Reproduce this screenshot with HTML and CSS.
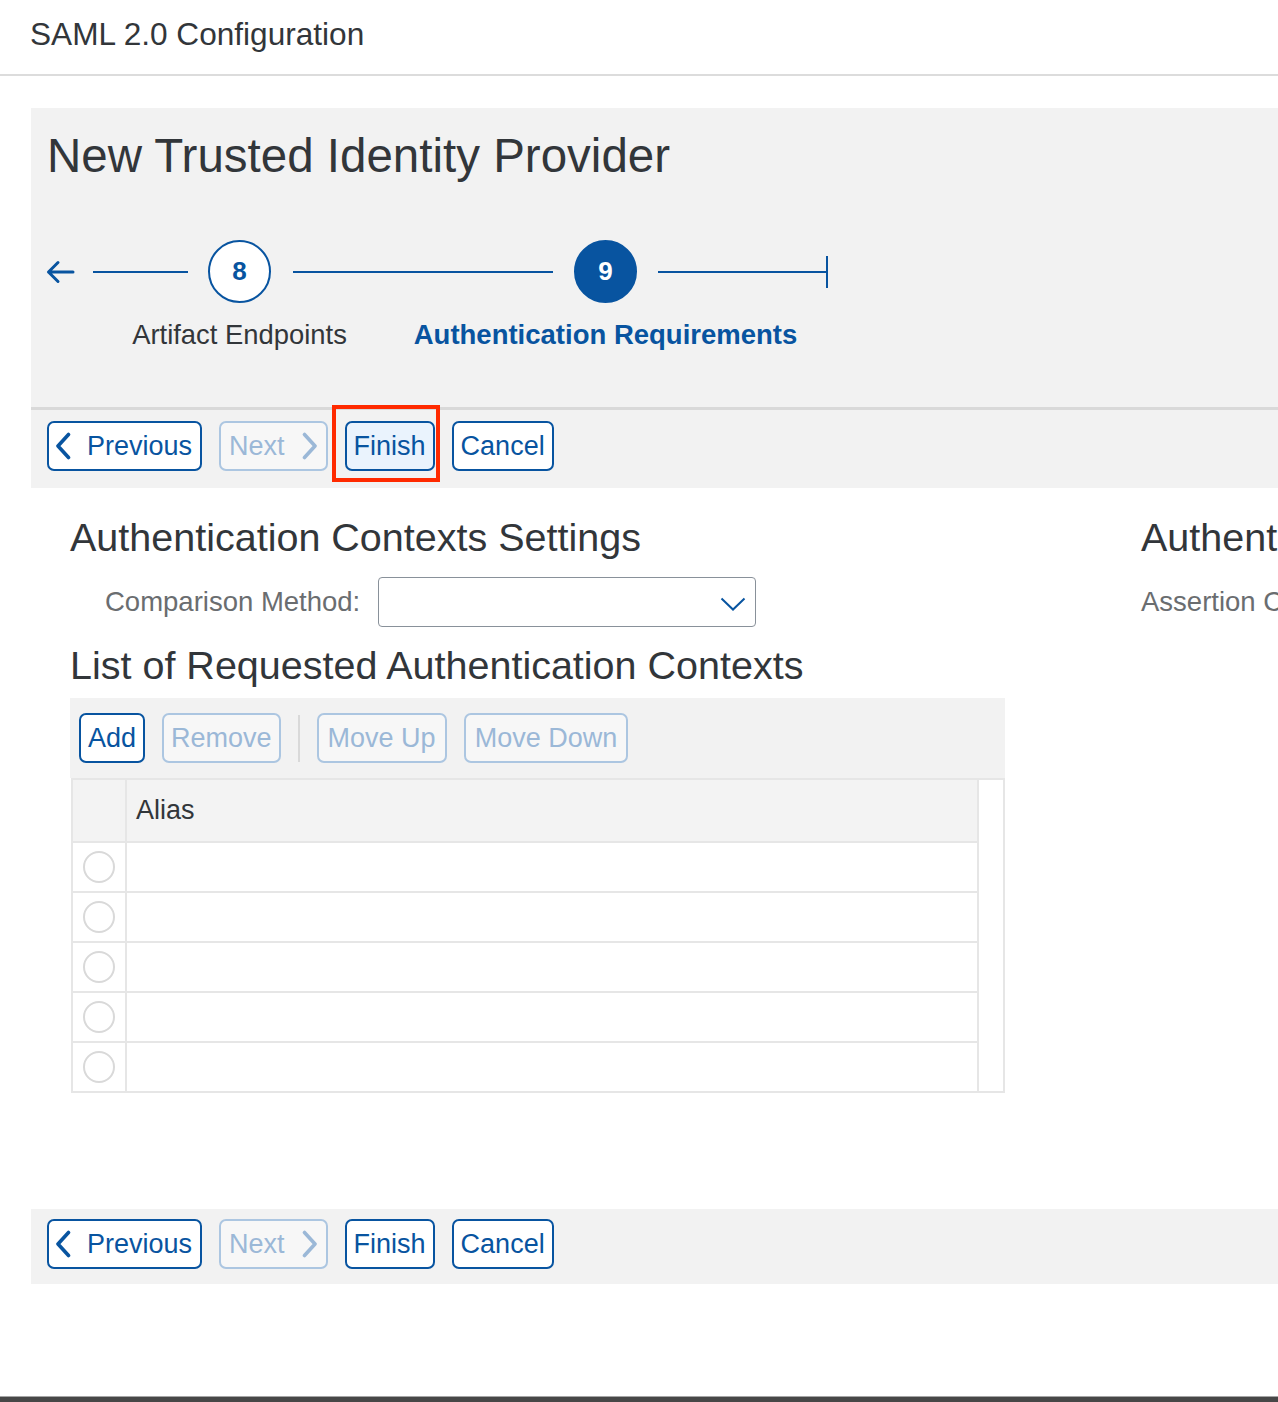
FILE: index.html
```html
<!DOCTYPE html>
<html lang="en">
<head>
<meta charset="utf-8">
<title>SAML 2.0 Configuration</title>
<link rel="stylesheet" href="styles.css">
</head>
<body>
<div class="page">
  <header class="page-header">
    <h1 class="page-title">SAML 2.0 Configuration</h1>
  </header>
  <main class="content">
    <section class="wizard">
      <h2 class="wizard-title">New Trusted Identity Provider</h2>
      <div class="stepper">
        <svg class="back-arrow" viewBox="0 0 30 24" aria-hidden="true"><path d="M28 12H3.5M13 2.5L3.5 12L13 21.5" fill="none" stroke="#0854a0" stroke-width="3" stroke-linecap="round" stroke-linejoin="round"/></svg>
        <span class="step-line line-a"></span>
        <div class="step">
          <span class="step-circle">8</span>
          <span class="step-label">Artifact Endpoints</span>
        </div>
        <span class="step-line line-b"></span>
        <div class="step step-current">
          <span class="step-circle">9</span>
          <span class="step-label">Authentication Requirements</span>
        </div>
        <span class="step-line line-c"></span>
        <span class="step-end"></span>
      </div>
      <div class="button-bar wizard-footer">
        <button class="btn btn-prev"><svg class="chev" viewBox="0 0 16 28" aria-hidden="true"><path d="M13.5 2.5L3 14L13.5 25.5" fill="none" stroke="currentColor" stroke-width="3.6" stroke-linecap="round" stroke-linejoin="round"/></svg>Previous</button>
        <button class="btn btn-next btn-disabled">Next<svg class="chev" viewBox="0 0 16 28" aria-hidden="true"><path d="M2.5 2.5L13 14L2.5 25.5" fill="none" stroke="currentColor" stroke-width="3.6" stroke-linecap="round" stroke-linejoin="round"/></svg></button>
        <button class="btn btn-focus">Finish</button>
        <button class="btn">Cancel</button>
      </div>
    </section>

    <div class="columns">
      <div class="col-left">
        <h3 class="section-title">Authentication Contexts Settings</h3>
        <div class="form-row form-row-indent">
          <span class="form-label">Comparison Method:</span>
          <div class="select">
            <svg class="select-chev" viewBox="0 0 26 14" aria-hidden="true"><path d="M1.5 1.5L13 12.5L24.5 1.5" fill="none" stroke="#0854a0" stroke-width="2"/></svg>
          </div>
        </div>
        <h3 class="section-title list-title">List of Requested Authentication Contexts</h3>
        <div class="toolbar">
          <button class="btn">Add</button>
          <button class="btn btn-disabled">Remove</button>
          <span class="toolbar-sep"></span>
          <button class="btn btn-disabled btn-wide">Move Up</button>
          <button class="btn btn-disabled btn-wide">Move Down</button>
        </div>
        <div class="table">
          <div class="table-main">
            <div class="row row-head">
              <div class="cell-sel"></div>
              <div class="cell-alias">Alias</div>
            </div>
            <div class="row"><div class="cell-sel"><span class="radio"></span></div><div class="cell-alias"></div></div>
            <div class="row"><div class="cell-sel"><span class="radio"></span></div><div class="cell-alias"></div></div>
            <div class="row"><div class="cell-sel"><span class="radio"></span></div><div class="cell-alias"></div></div>
            <div class="row"><div class="cell-sel"><span class="radio"></span></div><div class="cell-alias"></div></div>
            <div class="row"><div class="cell-sel"><span class="radio"></span></div><div class="cell-alias"></div></div>
          </div>
          <div class="table-scroll"></div>
        </div>
      </div>
      <div class="col-right">
        <h3 class="section-title">Authentication Settings</h3>
        <div class="form-row">
          <span class="form-label">Assertion Consumer Service:</span>
        </div>
      </div>
    </div>

    <div class="button-bar bottom-bar">
      <button class="btn btn-prev"><svg class="chev" viewBox="0 0 16 28" aria-hidden="true"><path d="M13.5 2.5L3 14L13.5 25.5" fill="none" stroke="currentColor" stroke-width="3.6" stroke-linecap="round" stroke-linejoin="round"/></svg>Previous</button>
      <button class="btn btn-next btn-disabled">Next<svg class="chev" viewBox="0 0 16 28" aria-hidden="true"><path d="M2.5 2.5L13 14L2.5 25.5" fill="none" stroke="currentColor" stroke-width="3.6" stroke-linecap="round" stroke-linejoin="round"/></svg></button>
      <button class="btn">Finish</button>
      <button class="btn">Cancel</button>
    </div>
  </main>
</div>
</body>
</html>
```

FILE: styles.css
```css
* { box-sizing: border-box; }

html, body {
  margin: 0;
  padding: 0;
  overflow: hidden;
}

body {
  width: 1278px;
  font-family: "Liberation Sans", Arial, sans-serif;
  color: #32363a;
  background: #fff;
}

.page {
  height: 1402px;
  border-bottom: 5px solid #474747;
  box-shadow: inset 0 -1px 0 #a5a5a5;
}

.page-header {
  height: 76px;
  border-bottom: 2px solid #dcdcdc;
  padding: 16px 0 0 30px;
}

.page-title {
  margin: 0;
  font-size: 31.6px;
  font-weight: normal;
  line-height: 36px;
  color: #32363a;
}

.content {
  padding: 32px 0 0 31px;
}

.wizard {
  background: #f2f2f2;
}

.wizard-title {
  margin: 0;
  padding: 20px 0 0 16px;
  font-size: 47.5px;
  font-weight: normal;
  line-height: 56px;
  color: #32363a;
  white-space: nowrap;
}

/* stepper */
.stepper {
  display: flex;
  align-items: flex-start;
  margin-top: 56px;
  padding-left: 14px;
}

.back-arrow {
  width: 30px;
  height: 24px;
  flex: none;
  margin-top: 19.5px;
}

.step-line {
  flex: none;
  height: 2px;
  margin-top: 30.5px;
  background: #0854a0;
}

.line-a { margin-left: 18px; width: 95px; }
.line-b { margin-left: 22px; width: 260px; }
.line-c { margin-left: 21px; width: 168px; }

.step {
  flex: none;
  width: 63px;
  margin-left: 20px;
  display: flex;
  flex-direction: column;
  align-items: center;
}

.step-current { margin-left: 21px; }

.step-circle {
  width: 63px;
  height: 63px;
  border-radius: 50%;
  border: 2px solid #0854a0;
  background: #fff;
  color: #0854a0;
  font-weight: bold;
  font-size: 26px;
  display: flex;
  align-items: center;
  justify-content: center;
}

.step-label {
  margin-top: 16px;
  white-space: nowrap;
  font-size: 27.4px;
  line-height: 32px;
  color: #32363a;
}

.step-current .step-circle {
  background: #0854a0;
  color: #fff;
}

.step-current .step-label {
  color: #0854a0;
  font-weight: bold;
  font-size: 27.5px;
}

.step-end {
  flex: none;
  width: 2px;
  height: 32px;
  margin-top: 15.5px;
  background: #0854a0;
}

/* buttons */
.button-bar {
  display: flex;
  gap: 17px;
  padding-left: 16px;
}

.wizard-footer {
  margin-top: 56px;
  border-top: 3px solid #d9d9d9;
  padding-top: 11px;
  padding-bottom: 17px;
}

.bottom-bar {
  margin-top: 116px;
  background: #f2f2f2;
  padding-top: 10px;
  padding-bottom: 15px;
}

.btn {
  position: relative;
  height: 50px;
  flex: none;
  display: inline-flex;
  align-items: center;
  gap: 16px;
  padding: 0 7px;
  border: 2px solid #0854a0;
  border-radius: 7px;
  background: #fff;
  color: #0854a0;
  font-family: "Liberation Sans", Arial, sans-serif;
  font-size: 27px;
  line-height: 1;
  white-space: nowrap;
}

.btn-prev { padding: 0 8px 0 6px; }
.btn-next { padding: 0 8px 0 8px; gap: 17px; }

.chev {
  width: 16px;
  height: 28px;
  flex: none;
}

.btn-disabled {
  border-color: #acc6e1;
  color: #9bb8d7;
  background: #f7f7f7;
}

.btn-focus {
  background: #eaf3fd;
}

.btn-focus::after {
  content: "";
  position: absolute;
  left: -15px;
  right: -7px;
  top: -18px;
  bottom: -13px;
  border: 4px solid #ff2a00;
  pointer-events: none;
}

/* content columns */
.columns {
  display: flex;
  gap: 136px;
  padding-left: 39px;
}

.col-left {
  flex: none;
  width: 935px;
}

.col-right {
  flex: none;
  white-space: nowrap;
}

.section-title {
  margin: 26px 0 0;
  font-size: 39.5px;
  font-weight: normal;
  line-height: 46px;
  color: #32363a;
  white-space: nowrap;
}

.list-title {
  margin-top: 15px;
}

.form-row {
  display: flex;
  align-items: center;
  gap: 18px;
  height: 50px;
  margin-top: 17px;
}

.form-row-indent {
  padding-left: 35px;
}

.form-label {
  font-size: 27.5px;
  color: #6a6d70;
  white-space: nowrap;
}

.select {
  width: 378px;
  height: 50px;
  border: 1px solid #89919a;
  border-radius: 4px;
  background: #fff;
  display: flex;
  align-items: center;
  justify-content: flex-end;
  padding-right: 9px;
}

.select-chev {
  width: 26px;
  height: 14px;
  margin-top: 4px;
}

/* toolbar */
.toolbar {
  margin-top: 10px;
  height: 80px;
  background: #f2f2f2;
  display: flex;
  align-items: center;
  gap: 17px;
  padding-left: 9px;
}

.toolbar .btn { padding: 0 7px; }
.toolbar .btn-wide { padding: 0 9px; }

.toolbar-sep {
  flex: none;
  width: 2px;
  height: 47px;
  background: #d9d9d9;
}

/* table */
.table {
  display: flex;
  width: 934px;
  margin-left: 1px;
  border: 2px solid #e6e6e6;
}

.table-main {
  flex: 1;
}

.table-scroll {
  flex: none;
  width: 26px;
  border-left: 2px solid #e6e6e6;
  background: #fff;
}

.row {
  display: grid;
  grid-template-columns: 54px 1fr;
  height: 50px;
  border-bottom: 2px solid #e6e6e6;
  background: #fff;
}

.row:last-child {
  height: 48px;
  border-bottom: none;
}

.row-head {
  height: 63px;
  background: #f3f3f3;
}

.cell-sel {
  border-right: 2px solid #e6e6e6;
  display: flex;
  align-items: center;
  justify-content: center;
}

.cell-alias {
  display: flex;
  align-items: center;
  padding-left: 9px;
  font-size: 27px;
  color: #32363a;
}

.radio {
  width: 32px;
  height: 32px;
  border: 2px solid #d9d9d9;
  border-radius: 50%;
  background: #fff;
}
```
